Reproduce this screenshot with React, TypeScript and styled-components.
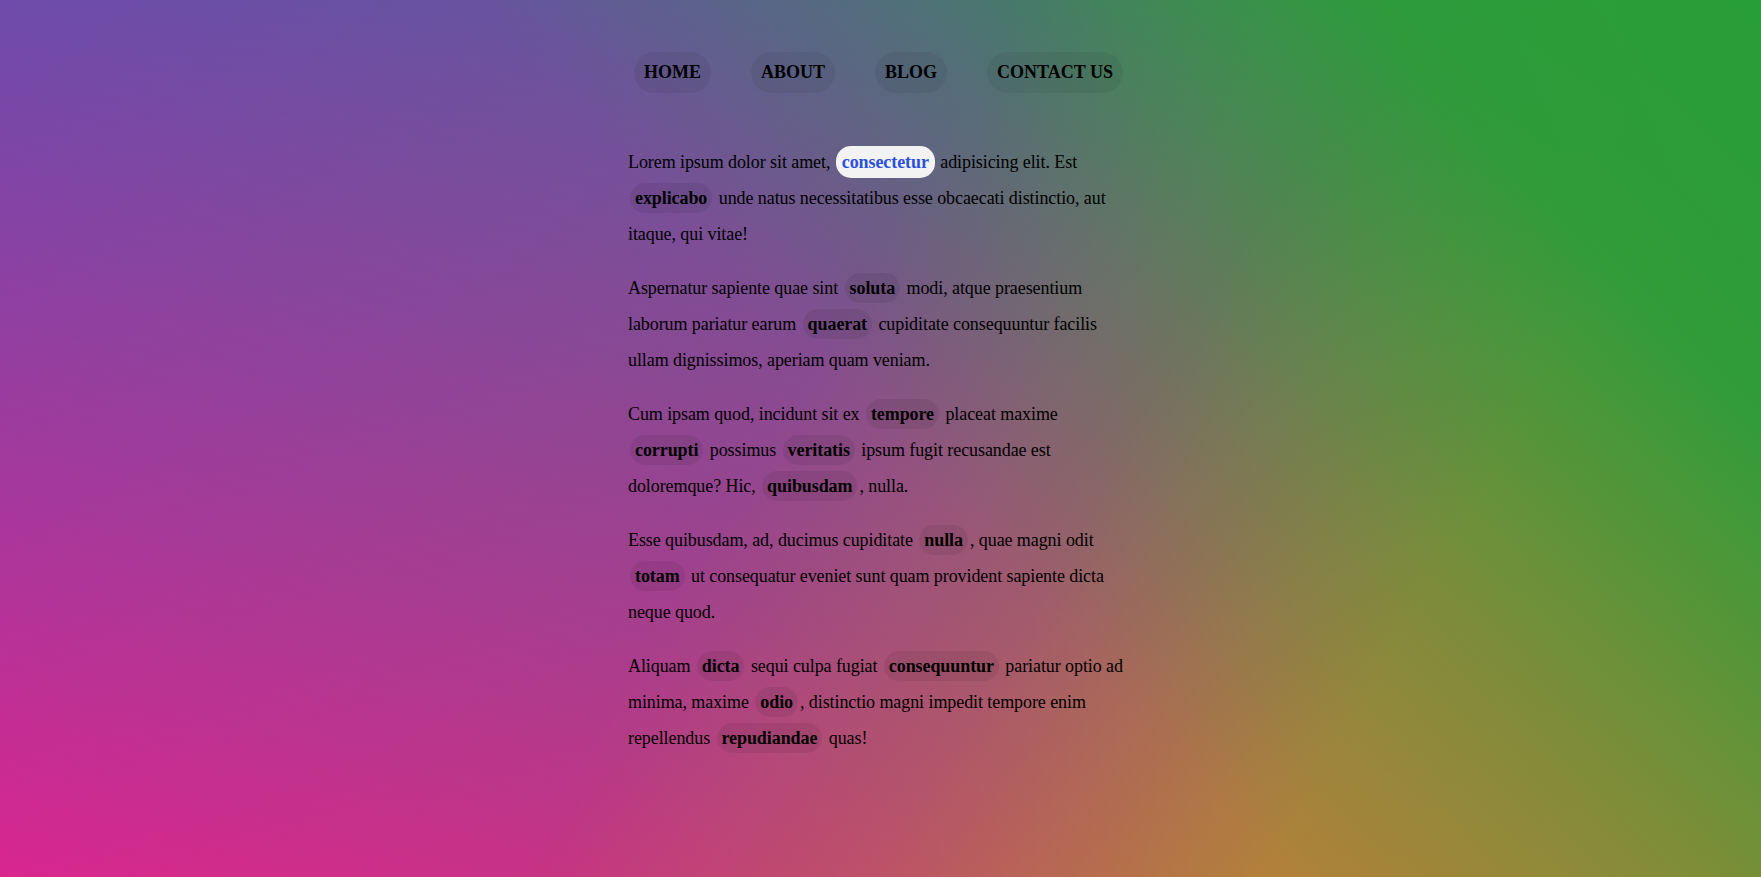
import React from "react";
import styled, { createGlobalStyle } from "styled-components";

const GlobalStyle = createGlobalStyle`
  html, body {
    margin: 0;
    padding: 0;
    min-height: 100%;
  }
  body {
    font-family: "Liberation Serif", "Times New Roman", serif;
    color: #000;
  }
`;

const Page = styled.div`
  min-height: 100vh;
  box-sizing: border-box;
  padding-top: 52px;
  background:
    linear-gradient(
      227deg,
      rgba(40, 158, 56, 1) 0%,
      rgba(40, 158, 56, 0.95) 15%,
      rgba(40, 158, 56, 0.5) 34%,
      rgba(40, 158, 56, 0.22) 50%,
      rgba(40, 158, 56, 0.1) 78%,
      rgba(40, 158, 56, 0) 100%
    ),
    linear-gradient(
      300deg,
      rgba(215, 135, 45, 0.9) 0%,
      rgba(215, 135, 45, 0.85) 22%,
      rgba(215, 135, 45, 0.3) 39%,
      rgba(215, 135, 45, 0) 55%
    ),
    linear-gradient(to bottom, #7a3ebe 0%, #d8268e 100%);
  display: flex;
  flex-direction: column;
  align-items: center;
`;

const Nav = styled.nav`
  display: flex;
  gap: 40px;
  padding-right: 4px;
  margin-bottom: 33px;
`;

const NavLink = styled.a`
  display: block;
  padding: 10px;
  border-radius: 21px;
  background: rgba(0, 0, 0, 0.06);
  font-size: 18px;
  line-height: 21px;
  font-weight: 700;
  text-transform: uppercase;
  text-decoration: none;
  color: #000;
`;

const Article = styled.article`
  width: 505px;
`;

const Paragraph = styled.p`
  margin: 18px 0;
  font-size: 18px;
  line-height: 36px;
  letter-spacing: -0.08px;
`;

const Tag = styled.span<{ $active?: boolean }>`
  font-weight: 700;
  padding: ${(p) => (p.$active ? "6px" : "5px")};
  margin: ${(p) => (p.$active ? "0 1px" : "0 2px")};
  border-radius: 15px;
  background: ${(p) => (p.$active ? "#f3f3f4" : "rgba(0, 0, 0, 0.07)")};
  color: ${(p) => (p.$active ? "#2a50e0" : "#000")};
`;

type Piece = string | { tag: string; active?: boolean };

const paragraphs: Piece[][] = [
  [
    "Lorem ipsum dolor sit amet, ",
    { tag: "consectetur", active: true },
    " adipisicing elit. Est ",
    { tag: "explicabo" },
    " unde natus necessitatibus esse obcaecati distinctio, aut itaque, qui vitae!",
  ],
  [
    "Aspernatur sapiente quae sint ",
    { tag: "soluta" },
    " modi, atque praesentium laborum pariatur earum ",
    { tag: "quaerat" },
    " cupiditate consequuntur facilis ullam dignissimos, aperiam quam veniam.",
  ],
  [
    "Cum ipsam quod, incidunt sit ex ",
    { tag: "tempore" },
    " placeat maxime ",
    { tag: "corrupti" },
    " possimus ",
    { tag: "veritatis" },
    " ipsum fugit recusandae est doloremque? Hic, ",
    { tag: "quibusdam" },
    ", nulla.",
  ],
  [
    "Esse quibusdam, ad, ducimus cupiditate ",
    { tag: "nulla" },
    ", quae magni odit ",
    { tag: "totam" },
    " ut consequatur eveniet sunt quam provident sapiente dicta neque quod.",
  ],
  [
    "Aliquam ",
    { tag: "dicta" },
    " sequi culpa fugiat ",
    { tag: "consequuntur" },
    " pariatur optio ad minima, maxime ",
    { tag: "odio" },
    ", distinctio magni impedit tempore enim repellendus ",
    { tag: "repudiandae" },
    " quas!",
  ],
];

const navItems = ["Home", "About", "Blog", "Contact us"];

export default function App() {
  return (
    <>
      <GlobalStyle />
      <Page>
        <Nav>
          {navItems.map((item) => (
            <NavLink key={item} href="#">
              {item}
            </NavLink>
          ))}
        </Nav>
        <Article>
          {paragraphs.map((pieces, i) => (
            <Paragraph key={i}>
              {pieces.map((piece, j) =>
                typeof piece === "string" ? (
                  <React.Fragment key={j}>{piece}</React.Fragment>
                ) : (
                  <Tag key={j} $active={piece.active}>
                    {piece.tag}
                  </Tag>
                )
              )}
            </Paragraph>
          ))}
        </Article>
      </Page>
    </>
  );
}
